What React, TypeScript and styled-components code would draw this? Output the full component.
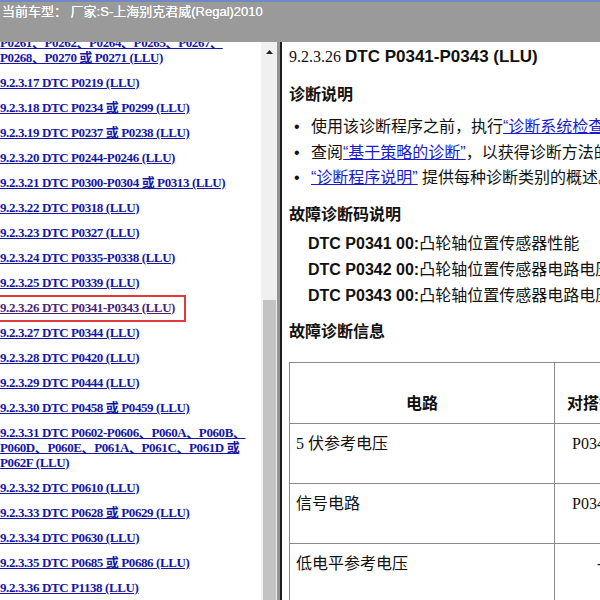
import React from 'react';
import styled, { createGlobalStyle } from 'styled-components';

const GlobalStyle = createGlobalStyle`
  html, body {
    margin: 0;
    padding: 0;
    background: #ffffff;
  }
  body {
    width: 600px;
    height: 600px;
    overflow: hidden;
  }
`;

const Screen = styled.div`
  width: 600px;
  height: 600px;
  display: flex;
  flex-direction: column;
  overflow: hidden;
  font-family: "Liberation Sans", "Noto Sans CJK SC", sans-serif;
  color: #111;
`;

const TopBar = styled.div`
  box-sizing: border-box;
  height: 42px;
  flex-shrink: 0;
  background: #9a9a9a;
  border-top: 2px solid #6f88c6;
  color: #ffffff;
  font-size: 13px;
  line-height: 20px;
  padding: 0 0 0 2px;
  white-space: nowrap;
  text-shadow: 0 0 0.4px #ffffff;
`;

const Body = styled.div`
  flex: 1;
  min-height: 0;
  display: flex;
`;

const LeftPane = styled.div`
  width: 261px;
  flex-shrink: 0;
  overflow: hidden;
  background: #ffffff;
`;

const LinkList = styled.div`
  display: flex;
  flex-direction: column;
  align-items: flex-start;
  gap: 10px;
  margin-top: -22px;
`;

const TocLink = styled.a<{ $visited?: boolean }>`
  display: block;
  font-family: "Liberation Serif", "Noto Sans CJK SC", serif;
  font-weight: bold;
  font-size: 13px;
  letter-spacing: -0.4px;
  line-height: 15px;
  white-space: nowrap;
  color: ${p => (p.$visited ? '#4a1f78' : '#1616a6')};
  text-decoration: underline;
`;

const Marked = styled.div`
  border: 2px solid #e2393c;
  padding: 3px 9px 5px 5px;
  margin: -5px 0 -7px -7px;
`;

const ScrollBar = styled.div`
  width: 16px;
  flex-shrink: 0;
  background: #f0f0f0;
  display: flex;
  flex-direction: column;
`;

const ScrollArrow = styled.div`
  height: 20px;
  display: flex;
  align-items: center;
  justify-content: center;
`;

const ScrollThumb = styled.div`
  margin-top: auto;
  height: 300px;
  margin-left: 2px;
  margin-right: 1px;
  background: #c3c3c3;
`;

const Splitter = styled.div`
  width: 2px;
  flex-shrink: 0;
  background: #1c1c1c;
  border-left: 3px solid #939393;
`;

const RightPane = styled.div`
  flex: 1;
  min-width: 0;
  overflow: hidden;
  padding-left: 7px;
  background: #ffffff;
`;

const Title = styled.div`
  margin-top: 4px;
  line-height: 22px;
  white-space: nowrap;
`;

const TitleNum = styled.span`
  font-family: "Liberation Serif", serif;
  font-size: 16px;
`;

const TitleCode = styled.span`
  font-family: "Liberation Sans", sans-serif;
  font-weight: bold;
  font-size: 17px;
`;

const SectionHead = styled.div<{ $gap: number }>`
  margin-top: ${p => p.$gap}px;
  font-size: 16px;
  font-weight: bold;
  line-height: 22px;
  white-space: nowrap;
`;

const Bullets = styled.ul`
  list-style: none;
  margin: 8px 0 0 0;
  padding: 0;
`;

const BulletItem = styled.li`
  display: flex;
  font-size: 16px;
  line-height: 25.5px;
  white-space: nowrap;
`;

const Dot = styled.span`
  width: 22px;
  flex-shrink: 0;
  padding-left: 5px;
  box-sizing: border-box;
`;

const DocLink = styled.a`
  color: #1a1ad0;
  text-decoration: underline;
`;

const DtcList = styled.div`
  margin-top: 4.5px;
  padding-left: 19px;
  font-size: 16px;
  line-height: 26px;
  white-space: nowrap;
`;

const DtcCode = styled.b`
  font-family: "Liberation Sans", sans-serif;
`;

const InfoTable = styled.table`
  margin-top: 19.5px;
  border-collapse: collapse;
  table-layout: fixed;
  width: 400px;
  font-family: "Liberation Serif", "Noto Sans CJK SC", serif;
  font-size: 16px;
  color: #111;
`;

const HeadCell = styled.th<{ $pad: number; $align: string }>`
  height: 60px;
  box-sizing: border-box;
  border: 1px solid #8a8a8a;
  padding: 31px 0 9px ${p => p.$pad}px;
  vertical-align: top;
  text-align: ${p => p.$align};
  line-height: 20px;
  font-family: "Liberation Sans", "Noto Sans CJK SC", sans-serif;
  font-weight: bold;
  white-space: nowrap;
  overflow: hidden;
`;

const Cell = styled.td<{ $pad: number }>`
  height: 60px;
  box-sizing: border-box;
  border: 1px solid #8a8a8a;
  padding: 10px 0 0 ${p => p.$pad}px;
  vertical-align: top;
  line-height: 20px;
  white-space: nowrap;
  overflow: hidden;
`;

const tocItems: { lines: string[]; visited?: boolean; marked?: boolean }[] = [
  { lines: ['9.2.3.16 DTC P0201、P0202、P0203、P0204、', 'P0261、P0262、P0264、P0265、P0267、', 'P0268、P0270 或 P0271 (LLU)'] },
  { lines: ['9.2.3.17 DTC P0219 (LLU)'] },
  { lines: ['9.2.3.18 DTC P0234 或 P0299 (LLU)'] },
  { lines: ['9.2.3.19 DTC P0237 或 P0238 (LLU)'] },
  { lines: ['9.2.3.20 DTC P0244-P0246 (LLU)'] },
  { lines: ['9.2.3.21 DTC P0300-P0304 或 P0313 (LLU)'] },
  { lines: ['9.2.3.22 DTC P0318 (LLU)'] },
  { lines: ['9.2.3.23 DTC P0327 (LLU)'] },
  { lines: ['9.2.3.24 DTC P0335-P0338 (LLU)'] },
  { lines: ['9.2.3.25 DTC P0339 (LLU)'] },
  { lines: ['9.2.3.26 DTC P0341-P0343 (LLU)'], visited: true, marked: true },
  { lines: ['9.2.3.27 DTC P0344 (LLU)'] },
  { lines: ['9.2.3.28 DTC P0420 (LLU)'] },
  { lines: ['9.2.3.29 DTC P0444 (LLU)'] },
  { lines: ['9.2.3.30 DTC P0458 或 P0459 (LLU)'] },
  { lines: ['9.2.3.31 DTC P0602-P0606、P060A、P060B、', 'P060D、P060E、P061A、P061C、P061D 或', 'P062F (LLU)'] },
  { lines: ['9.2.3.32 DTC P0610 (LLU)'] },
  { lines: ['9.2.3.33 DTC P0628 或 P0629 (LLU)'] },
  { lines: ['9.2.3.34 DTC P0630 (LLU)'] },
  { lines: ['9.2.3.35 DTC P0685 或 P0686 (LLU)'] },
  { lines: ['9.2.3.36 DTC P1138 (LLU)'] },
];

const dtcRows = [
  { code: 'DTC P0341 00:', text: '凸轮轴位置传感器性能' },
  { code: 'DTC P0342 00:', text: '凸轮轴位置传感器电路电压过低' },
  { code: 'DTC P0343 00:', text: '凸轮轴位置传感器电路电压过高' },
];

const circuitRows = [
  { name: '5 伏参考电压', value: 'P0342', pad: 17 },
  { name: '信号电路', value: 'P0342', pad: 17 },
  { name: '低电平参考电压', value: '-', pad: 42 },
];

export default function App() {
  return (
    <Screen>
      <GlobalStyle />
      <TopBar>当前车型： 厂家:S-上海别克君威(Regal)2010</TopBar>
      <Body>
        <LeftPane>
          <LinkList>
            {tocItems.map((item, i) => {
              const link = (
                <TocLink href="#" $visited={item.visited}>
                  {item.lines.map((l, j) => (
                    <React.Fragment key={j}>
                      {j > 0 && <br />}
                      {l}
                    </React.Fragment>
                  ))}
                </TocLink>
              );
              return item.marked ? <Marked key={i}>{link}</Marked> : <React.Fragment key={i}>{link}</React.Fragment>;
            })}
          </LinkList>
        </LeftPane>
        <ScrollBar>
          <ScrollArrow>
            <svg width="7" height="4" viewBox="0 0 7 4">
              <path d="M3.5 0 L7 4 L0 4 Z" fill="#222" />
            </svg>
          </ScrollArrow>
          <ScrollThumb />
        </ScrollBar>
        <Splitter />
        <RightPane>
          <Title>
            <TitleNum>9.2.3.26 </TitleNum>
            <TitleCode>DTC P0341-P0343 (LLU)</TitleCode>
          </Title>
          <SectionHead $gap={16}>诊断说明</SectionHead>
          <Bullets>
            <BulletItem>
              <Dot>•</Dot>
              <span>
                使用该诊断程序之前，执行<DocLink href="#">“诊断系统检查 - 车辆”</DocLink>。
              </span>
            </BulletItem>
            <BulletItem>
              <Dot>•</Dot>
              <span>
                查阅<DocLink href="#">“基于策略的诊断”</DocLink>，以获得诊断方法的概述。
              </span>
            </BulletItem>
            <BulletItem>
              <Dot>•</Dot>
              <span>
                <DocLink href="#">“诊断程序说明”</DocLink> 提供每种诊断类别的概述。
              </span>
            </BulletItem>
          </Bullets>
          <SectionHead $gap={13.5}>故障诊断码说明</SectionHead>
          <DtcList>
            {dtcRows.map(r => (
              <div key={r.code}>
                <DtcCode>{r.code}</DtcCode>
                {r.text}
              </div>
            ))}
          </DtcList>
          <SectionHead $gap={12}>故障诊断信息</SectionHead>
          <InfoTable>
            <colgroup>
              <col style={{ width: 265 }} />
              <col style={{ width: 135 }} />
            </colgroup>
            <thead>
              <tr>
                <HeadCell $pad={0} $align="center">电路</HeadCell>
                <HeadCell $pad={12} $align="left">对搭铁短路</HeadCell>
              </tr>
            </thead>
            <tbody>
              {circuitRows.map(r => (
                <tr key={r.name}>
                  <Cell $pad={6}>{r.name}</Cell>
                  <Cell $pad={r.pad}>{r.value}</Cell>
                </tr>
              ))}
            </tbody>
          </InfoTable>
        </RightPane>
      </Body>
    </Screen>
  );
}
